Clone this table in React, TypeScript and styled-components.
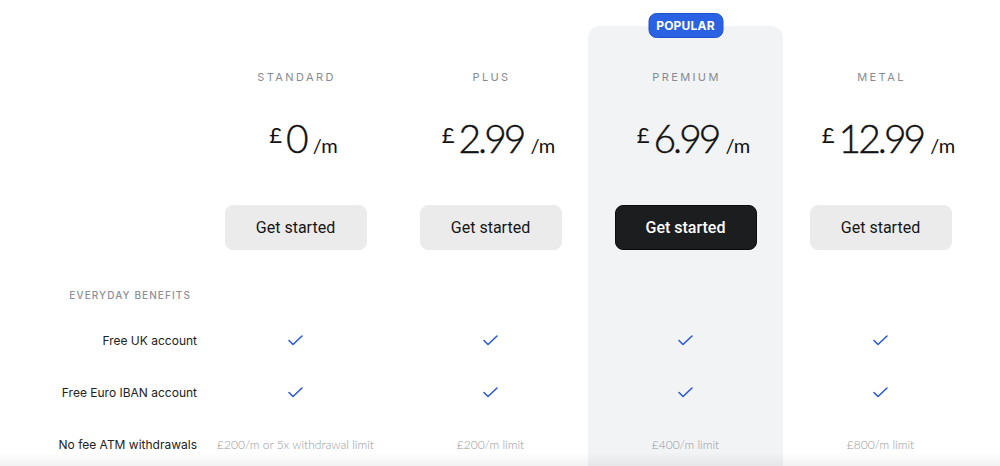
import React from "react";
import styled, { createGlobalStyle } from "styled-components";

const Global = createGlobalStyle`
  html, body { margin: 0; padding: 0; background: #fff; overflow: hidden; height: 466px; }
  body { font-family: "Inter", "Liberation Sans", sans-serif; }
  * { box-sizing: border-box; }
`;

const Page = styled.div`
  position: relative;
  width: 1000px;
  height: 466px;
  overflow: hidden;
  padding-top: 26px;
`;

const Table = styled.div`
  display: grid;
  grid-template-columns: 198px repeat(4, 195px);
  align-items: start;
`;

const Column = styled.div<{ $highlight?: boolean }>`
  position: relative;
  display: flex;
  flex-direction: column;
  background: ${(p) => (p.$highlight ? "#f2f3f5" : "transparent")};
  border-radius: 12px 12px 0 0;
  height: 460px;
`;

const Header = styled.div`
  height: 250px;
  display: flex;
  flex-direction: column;
  align-items: center;
`;

const TierName = styled.div`
  margin-top: 43px;
  height: 16px;
  line-height: 16px;
  font-size: 11px;
  letter-spacing: 2.4px;
  color: #868b93;
  padding-left: 2px;
`;

const Price = styled.div`
  margin-top: 29px;
  height: 48px;
  padding-left: 16px;
  display: flex;
  align-items: baseline;
  font-family: "Lato", "Inter", sans-serif;
  font-weight: 300;
  color: #111;
`;

const Currency = styled.span`
  font-size: 22px;
  line-height: 22px;
  font-weight: 400;
  align-self: flex-start;
  margin-top: 10px;
  margin-right: 4px;
`;

const Amount = styled.span`
  font-size: 39px;
  letter-spacing: -3px;
  line-height: 48px;
  -webkit-text-stroke: 0.4px #111;
`;

const Per = styled.span`
  font-size: 20px;
  font-weight: 400;
  margin-left: 7px;
`;

const Button = styled.button<{ $dark?: boolean }>`
  margin-top: 43px;
  width: 142px;
  height: 45px;
  border-radius: 8px;
  border: 1px solid ${(p) => (p.$dark ? "#0c0c0d" : "#ebebeb")};
  background: ${(p) => (p.$dark ? "#1c1d1f" : "#ebebeb")};
  color: ${(p) => (p.$dark ? "#fff" : "#151515")};
  font-family: "Roboto", "Inter", sans-serif;
  font-size: 16px;
  font-weight: ${(p) => (p.$dark ? 500 : 400)};
  cursor: pointer;
`;

const SectionRow = styled.div`
  height: 38px;
  display: flex;
  align-items: center;
  justify-content: flex-end;
  padding-right: 7px;
  font-size: 10px;
  letter-spacing: 1.1px;
  color: #8a8f98;
  font-weight: 500;
`;

const Row = styled.div<{ $label?: boolean }>`
  height: 52px;
  display: flex;
  align-items: center;
  justify-content: ${(p) => (p.$label ? "flex-end" : "center")};
  padding-right: ${(p) => (p.$label ? "1px" : "0")};
  font-size: 12px;
  color: #222;
`;

const Value = styled.span`
  font-family: "Lato", "Open Sans", sans-serif;
  font-weight: 300;
  font-size: 12px;
  color: #94979d;
`;

const Badge = styled.div`
  position: absolute;
  top: -13px;
  left: 50%;
  transform: translateX(-50%);
  width: 75px;
  height: 25px;
  border-radius: 8px;
  background: #2b62e3;
  border: 1px solid #1f52cc;
  color: #fff;
  font-size: 12px;
  font-weight: 700;
  letter-spacing: 0.2px;
  display: flex;
  align-items: center;
  justify-content: center;
`;

const BottomFade = styled.div`
  position: absolute;
  left: 0;
  right: 0;
  bottom: 0;
  height: 14px;
  background: linear-gradient(to bottom, rgba(0,0,0,0), rgba(0,0,0,0.05));
  pointer-events: none;
`;

const Check = () => (
  <svg width="15" height="11" viewBox="0 0 15 11" fill="none">
    <polyline points="1,5.5 5,9.5 14,1" stroke="#2653d8" strokeWidth="1.5" strokeLinecap="round" strokeLinejoin="round" />
  </svg>
);

type Plan = { name: string; amount: string; atm: string; highlight?: boolean };

const plans: Plan[] = [
  { name: "STANDARD", amount: "0", atm: "£200/m or 5x withdrawal limit" },
  { name: "PLUS", amount: "2.99", atm: "£200/m limit" },
  { name: "PREMIUM", amount: "6.99", atm: "£400/m limit", highlight: true },
  { name: "METAL", amount: "12.99", atm: "£800/m limit" },
];

export default function App() {
  return (
    <Page>
      <Global />
      <Table>
        <Column>
          <Header />
          <SectionRow>EVERYDAY BENEFITS</SectionRow>
          <Row $label>Free UK account</Row>
          <Row $label>Free Euro IBAN account</Row>
          <Row $label>No fee ATM withdrawals</Row>
        </Column>
        {plans.map((p) => (
          <Column key={p.name} $highlight={p.highlight}>
            {p.highlight && <Badge>POPULAR</Badge>}
            <Header>
              <TierName>{p.name}</TierName>
              <Price>
                <Currency>£</Currency>
                <Amount>{p.amount}</Amount>
                <Per>/m</Per>
              </Price>
              <Button $dark={p.highlight}>Get started</Button>
            </Header>
            <SectionRow />
            <Row><Check /></Row>
            <Row><Check /></Row>
            <Row><Value>{p.atm}</Value></Row>
          </Column>
        ))}
      </Table>
      <BottomFade />
    </Page>
  );
}
